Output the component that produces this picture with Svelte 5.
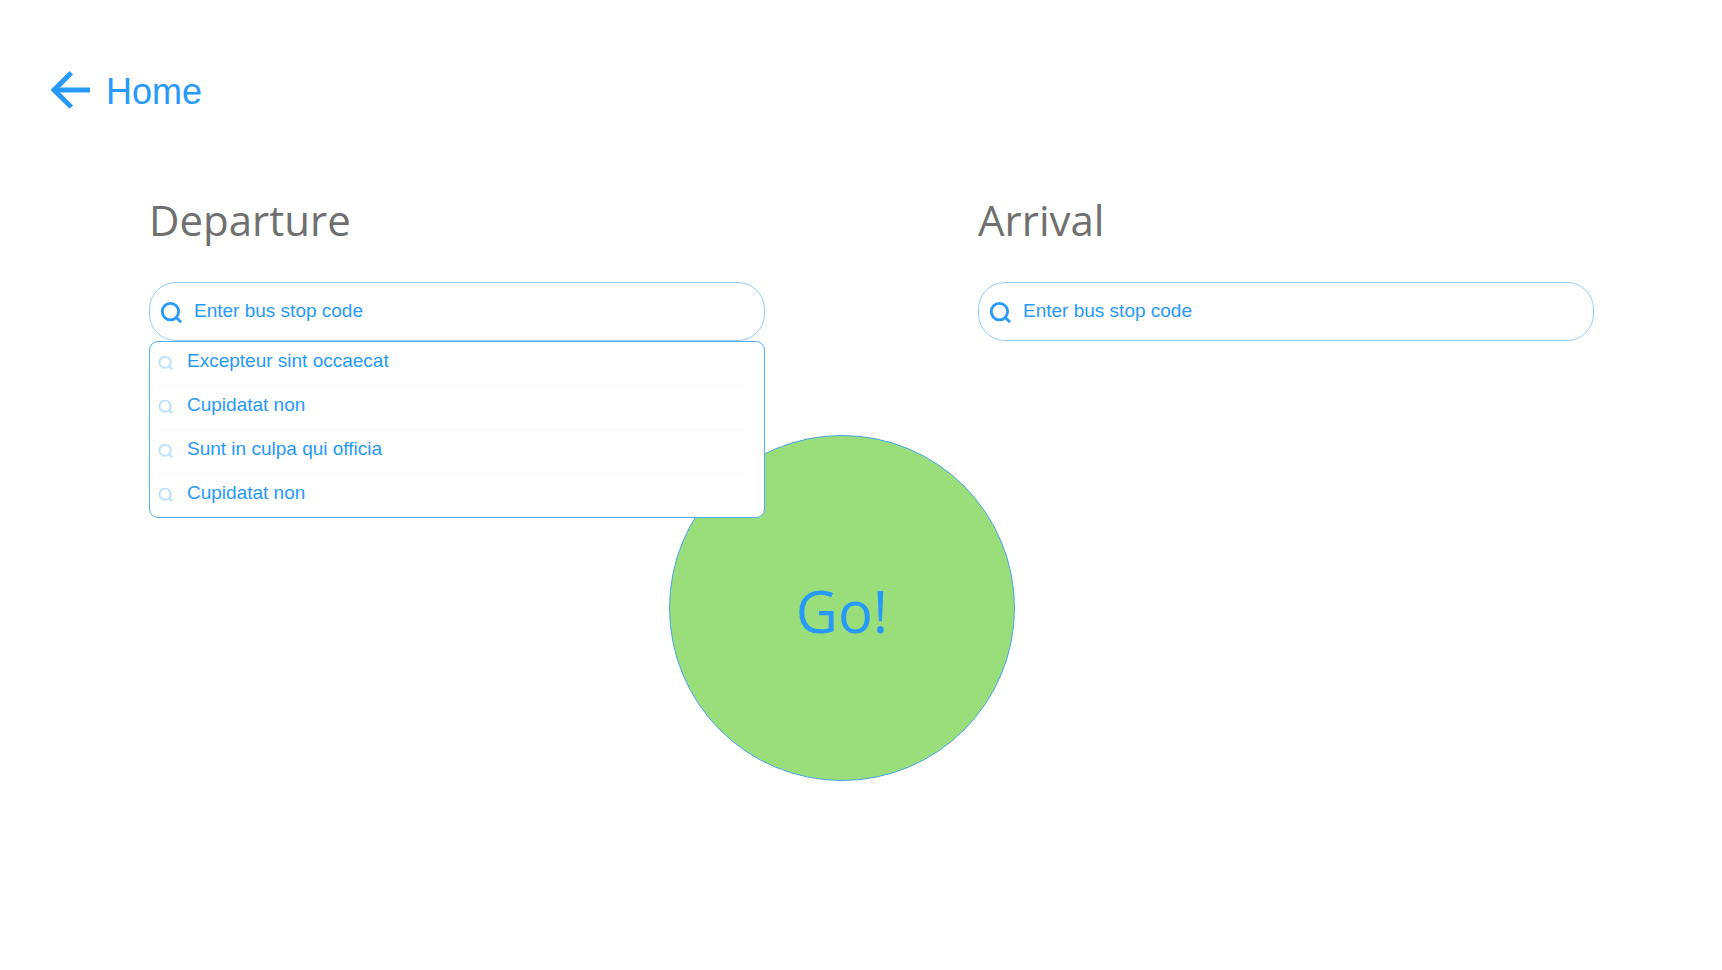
<script>
  const suggestions = [
    'Excepteur sint occaecat',
    'Cupidatat non',
    'Sunt in culpa qui officia',
    'Cupidatat non'
  ];

  const fields = [
    { id: 'departure', label: 'Departure', suggestions },
    { id: 'arrival', label: 'Arrival', suggestions: [] }
  ];
</script>

{#snippet searchIcon()}
  <svg class="search-icon" viewBox="0 0 22 22" aria-hidden="true">
    <circle cx="10.4" cy="10.6" r="8.2" />
    <path d="M16 16.2l5 5" />
  </svg>
{/snippet}

<div class="page">
  <header>
    <a class="home" href="#home">
      <svg viewBox="0 0 38 38" aria-hidden="true">
        <path d="M3 18.5h35" />
        <path d="M19.8 1.8L3 18.5l16.8 16.7" />
      </svg>
      <span>Home</span>
    </a>
  </header>

  <form onsubmit={(event) => event.preventDefault()}>
    <div class="stops">
      {#each fields as field}
        <section class="stop">
          <label for={field.id}>{field.label}</label>
          <div class="search">
            {@render searchIcon()}
            <input id={field.id} type="text" placeholder="Enter bus stop code" autocomplete="off" />
            {#if field.suggestions.length}
              <ul class="suggestions">
                {#each field.suggestions as name}
                  <li>
                    <button type="button">{@render searchIcon()}<span>{name}</span></button>
                  </li>
                {/each}
              </ul>
            {/if}
          </div>
        </section>
      {/each}
    </div>

    <div class="submit">
      <button class="go" type="submit">Go!</button>
    </div>
  </form>
</div>

<style>
  :global(body) {
    margin: 0;
    background: #fff;
  }

  .page {
    box-sizing: border-box;
    min-height: 100vh;
    padding: 69px 0 48px;
    color: #2699fb;
    font-family: "Liberation Sans", Arial, sans-serif;
    font-size: 19px;
  }

  header {
    display: flex;
    padding: 0 51px;
  }

  .home {
    display: flex;
    align-items: center;
    gap: 16px;
    color: inherit;
    font-size: 36px;
    line-height: 46px;
    text-decoration: none;
  }

  .home svg {
    width: 39px;
    height: 39px;
    padding-bottom: 3px;
  }

  .home path {
    fill: none;
    stroke: currentColor;
    stroke-width: 4.8;
  }

  .stops {
    display: grid;
    grid-template-columns: 1fr 1fr;
    gap: 213px;
    padding: 75px 128px 0 149px;
  }

  .stop label {
    display: block;
    margin-bottom: 32px;
    color: #707070;
    font-family: "Segoe UI", "Open Sans", sans-serif;
    font-size: 42px;
    line-height: 60px;
  }

  .search {
    position: relative;
    display: flex;
    align-items: center;
    gap: 12px;
    box-sizing: border-box;
    height: 59px;
    padding: 0 12px 0 10px;
    border: 1px solid #94cbfd;
    border-radius: 27px;
  }

  .search-icon {
    flex: none;
    width: 22px;
    height: 22px;
    fill: none;
    stroke: #2699fb;
    stroke-width: 2.8;
  }

  input {
    flex: 1;
    min-width: 0;
    padding: 0 0 2px;
    border: 0;
    outline: 0;
    background: transparent;
    color: inherit;
    font: inherit;
  }

  input::placeholder {
    color: #2699fb;
    opacity: 1;
  }

  .suggestions {
    position: absolute;
    z-index: 1;
    top: calc(100% + 1px);
    left: -1px;
    right: -1px;
    margin: 0;
    padding: 0 18px 0 8px;
    border: 1px solid #53aefc;
    border-radius: 9px;
    background: #fff;
    list-style: none;
  }

  .suggestions li + li {
    border-top: 1px solid #f1f9ff;
  }

  .suggestions button {
    display: flex;
    align-items: center;
    gap: 14px;
    width: 100%;
    height: 43px;
    padding: 0 0 5px;
    border: 0;
    background: transparent;
    color: inherit;
    font: inherit;
    text-align: left;
  }

  .suggestions .search-icon {
    width: 15px;
    height: 15px;
    padding-top: 3px;
    stroke: #bce0fd;
  }

  .submit {
    display: flex;
    justify-content: center;
    padding: 94px 38px 0 0;
  }

  .go {
    width: 346px;
    aspect-ratio: 1;
    padding: 4px 0 0;
    border: 1px solid #46a5e8;
    border-radius: 50%;
    background: #99de7b;
    color: #2699fb;
    font-family: "Segoe UI", "Open Sans", sans-serif;
    font-size: 58px;
  }
</style>
